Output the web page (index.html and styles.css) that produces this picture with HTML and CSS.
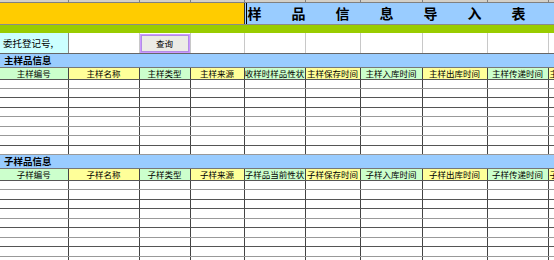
FILE: index.html
```html
<!DOCTYPE html>
<html>
<head>
<meta charset="utf-8">
<link rel="stylesheet" href="styles.css">
</head>
<body>
<div class="sheet">
<table class="grid">
<colgroup>
<col class="c1"><col class="c2"><col class="c3"><col class="c4"><col class="c5"><col class="c6"><col class="c7"><col class="c8"><col class="c9"><col class="c10">
</colgroup>
<tr class="colhead"><td></td><td></td><td></td><td></td><td></td><td></td><td></td><td></td><td></td><td></td></tr>
<tr class="titlerow">
<td colspan="4" class="orange"></td>
<td colspan="6" class="title"><div class="title-text"><span class="cur">样</span><span>品</span><span>信</span><span>息</span><span>导</span><span>入</span><span>表</span></div></td>
</tr>
<tr class="greenbar"><td colspan="10"></td></tr>
<tr class="query">
<td class="label">委托登记号,</td><td></td><td class="btncell"><div class="btn">查询</div></td><td></td><td></td><td></td><td></td><td></td><td></td><td></td>
</tr>
<tr class="section"><td colspan="10">主样品信息</td></tr>
<tr class="head">
<td class="g">主样编号</td><td class="y">主样名称</td><td class="g">主样类型</td><td class="y">主样来源</td><td class="g">收样时样品性状</td><td class="y">主样保存时间</td><td class="g">主样入库时间</td><td class="y">主样出库时间</td><td class="g">主样传递时间</td><td class="y last">主</td>
</tr>
<tr class="row"><td></td><td></td><td></td><td></td><td></td><td></td><td></td><td></td><td></td><td></td></tr>
<tr class="row dark"><td></td><td></td><td></td><td></td><td></td><td></td><td></td><td></td><td></td><td></td></tr>
<tr class="row tall dark"><td></td><td></td><td></td><td></td><td></td><td></td><td></td><td></td><td></td><td></td></tr>
<tr class="row"><td></td><td></td><td></td><td></td><td></td><td></td><td></td><td></td><td></td><td></td></tr>
<tr class="row tall"><td></td><td></td><td></td><td></td><td></td><td></td><td></td><td></td><td></td><td></td></tr>
<tr class="row"><td></td><td></td><td></td><td></td><td></td><td></td><td></td><td></td><td></td><td></td></tr>
<tr class="row tall dark"><td></td><td></td><td></td><td></td><td></td><td></td><td></td><td></td><td></td><td></td></tr>
<tr class="row"><td></td><td></td><td></td><td></td><td></td><td></td><td></td><td></td><td></td><td></td></tr>
<tr class="section sub"><td colspan="10">子样品信息</td></tr>
<tr class="head">
<td class="g">子样编号</td><td class="y">子样名称</td><td class="g">子样类型</td><td class="y">子样来源</td><td class="g">子样品当前性状</td><td class="y">子样保存时间</td><td class="g">子样入库时间</td><td class="y">子样出库时间</td><td class="g">子样传递时间</td><td class="y last">子</td>
</tr>
<tr class="row"><td></td><td></td><td></td><td></td><td></td><td></td><td></td><td></td><td></td><td></td></tr>
<tr class="row tall dark"><td></td><td></td><td></td><td></td><td></td><td></td><td></td><td></td><td></td><td></td></tr>
<tr class="row dark"><td></td><td></td><td></td><td></td><td></td><td></td><td></td><td></td><td></td><td></td></tr>
<tr class="row tall"><td></td><td></td><td></td><td></td><td></td><td></td><td></td><td></td><td></td><td></td></tr>
<tr class="row dark"><td></td><td></td><td></td><td></td><td></td><td></td><td></td><td></td><td></td><td></td></tr>
<tr class="row tall"><td></td><td></td><td></td><td></td><td></td><td></td><td></td><td></td><td></td><td></td></tr>
<tr class="row dark"><td></td><td></td><td></td><td></td><td></td><td></td><td></td><td></td><td></td><td></td></tr>
<tr class="row tall"><td></td><td></td><td></td><td></td><td></td><td></td><td></td><td></td><td></td><td></td></tr>
<tr class="row"><td></td><td></td><td></td><td></td><td></td><td></td><td></td><td></td><td></td><td></td></tr>
</table>
</div>
</body>
</html>
```

FILE: styles.css
```css
html, body {
  margin: 0;
  padding: 0;
  background: #ffffff;
  overflow: hidden;
}
.sheet {
  width: 554px;
  height: 260px;
  overflow: hidden;
}
.grid {
  border-collapse: collapse;
  table-layout: fixed;
  width: 600px;
  font-family: "Noto Sans CJK SC", "DejaVu Sans", sans-serif;
  font-size: 8.5px;
  color: #000;
}
.grid td {
  padding: 0;
  overflow: hidden;
  white-space: nowrap;
}
.c1 { width: 68px; }
.c2 { width: 71px; }
.c3 { width: 51px; }
.c4 { width: 54px; }
.c5 { width: 61px; }
.c6 { width: 55px; }
.c7 { width: 62px; }
.c8 { width: 65px; }
.c9 { width: 61px; }
.c10 { width: 52px; }

.colhead td {
  height: 2px;
  background: #d4d0c8;
  border-right: 1px solid #808080;
  border-bottom: 1px solid #808080;
}
.titlerow td {
  height: 21px;
  border-bottom: 1px solid #8a8a8a;
}
.orange {
  background: #ffcc00;
  border-right: 1px solid #333;
}
.title {
  background: #99ccff;
}
.title-text {
  display: flex;
  gap: 30px;
  padding-left: 3px;
  font-size: 14px;
  font-weight: bold;
  line-height: 21px;
}
.title-text span {
  width: 14px;
  flex: none;
}
.title-text .cur {
  border-left: 1px solid #000;
  margin-left: -2px;
  padding-left: 1px;
}
.greenbar td {
  height: 8px;
  background: #99cc00;
}
.query td {
  height: 20px;
  border-right: 1px solid #c8c8c8;
  border-bottom: 1px solid #666;
  background: #fff;
}
.query .label {
  background: #ccffff;
  padding-left: 3px;
  border-right: 1px solid #888;
  font-size: 9.5px;
}
.btn {
  box-sizing: border-box;
  height: 19px;
  margin-top: 1px;
  border: 1px solid #cc99ff;
  outline: 1px solid #b38ce6;
  outline-offset: -2px;
  background: #ecebe6;
  text-align: center;
  line-height: 17px;
  font-size: 8.5px;
}
.section td {
  height: 13px;
  background: #99ccff;
  font-weight: bold;
  padding-left: 4px;
  font-size: 9.5px;
  line-height: 13px;
  border-bottom: 1px solid #777;
}
.head td {
  height: 11px;
  text-align: center;
  line-height: 11px;
  border-right: 1px solid #444;
  border-bottom: 1px solid #555;
}
.head td.last {
  text-align: left;
  padding-left: 1px;
}
.head .g { background: #ccffcc; }
.head .y { background: #ffff99; }
.row td {
  height: 8px;
  border-right: 1px solid #444;
  border-bottom: 1px solid #999;
  background: #fff;
}
.row.tall td { height: 9px; }
.row.dark td { border-bottom-color: #555; }
```
